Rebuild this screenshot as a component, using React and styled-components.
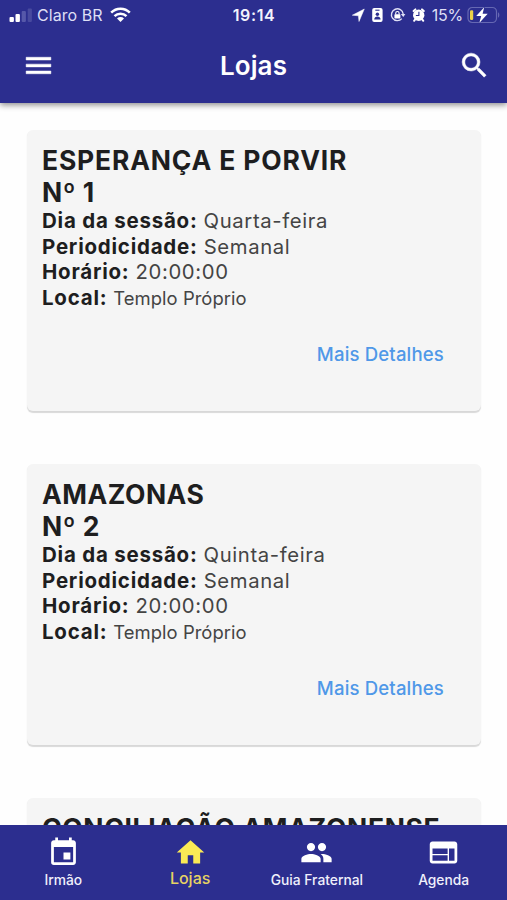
import React from 'react';
import styled, { createGlobalStyle } from 'styled-components';
import { MdMenu, MdSearch, MdEvent, MdHome, MdPeople, MdWeb } from 'react-icons/md';

const GlobalStyle = createGlobalStyle`
  * { box-sizing: border-box; }
  body { margin: 0; background: #fff; }
`;

const Screen = styled.div`
  width: 507px;
  height: 900px;
  display: flex;
  flex-direction: column;
  overflow: hidden;
  background: #fefefe;
  color: #1e1e1f;
  font-family: Inter, "Liberation Sans", sans-serif;
`;

const Header = styled.header`
  flex: none;
  height: 103px;
  background: #2c2e8f;
  color: #fff;
  z-index: 1;
  box-shadow: 0 2px 6px rgba(0, 0, 0, 0.45);
`;

const StatusBar = styled.div`
  height: 30px;
  display: grid;
  grid-template-columns: 1fr auto 1fr;
  align-items: center;
  padding: 0 7px 0 9px;
  font-size: 16px;
  line-height: 30px;
  color: #dedff5;
`;

const StatusGroup = styled.div`
  display: flex;
  align-items: center;
  justify-content: ${(p) => (p.$end ? 'flex-end' : 'flex-start')};
  svg { flex: none; display: block; }
`;

const Carrier = styled.span`
  margin: 0 7px 0 5px;
  letter-spacing: 0.05px;
`;

const Clock = styled.span`
  font-weight: 600;
  font-size: 16px;
  letter-spacing: 0.6px;
  margin-right: 1px;
  color: #f3f3fd;
`;

const Percent = styled.span`
  margin: 0 4px 0 6px;
  letter-spacing: -0.2px;
`;

const TitleBar = styled.div`
  height: 71px;
  display: grid;
  grid-template-columns: 1fr auto 1fr;
  align-items: center;
  padding: 0 16px 0 22px;
`;

const IconButton = styled.button`
  display: flex;
  padding: 0;
  border: 0;
  background: none;
  color: #fff;
  justify-self: ${(p) => (p.$end ? 'end' : 'start')};
  svg { width: 33px; height: 33px; }
  path:last-child { stroke: #fff; stroke-width: 0.35px; }
`;

const PageTitle = styled.h1`
  margin: 0 6px 0 0;
  font-size: 26px;
  line-height: 32px;
  font-weight: 600;
  letter-spacing: 0.1px;
`;

const List = styled.main`
  flex: 1;
  min-height: 0;
  overflow: hidden;
  padding: 27px 26px 0 27px;
  display: flex;
  flex-direction: column;
  gap: 53.5px;
`;

const Card = styled.article`
  flex: none;
  height: 280.7px;
  border-radius: 6px;
  background: #f5f5f5;
  box-shadow: 0 1.5px 1px rgba(0, 0, 0, 0.15);
  padding: 14px 37px 0 15px;
  display: flex;
  flex-direction: column;
`;

const CardTitle = styled.h2`
  margin: 0;
  font-size: 26.5px;
  line-height: 32px;
  font-weight: 650;
  letter-spacing: ${(p) => p.$spacing || '0.5px'};
  white-space: nowrap;
`;

const Field = styled.p`
  margin: 0;
  font-size: 20.3px;
  line-height: 25.6px;
  white-space: nowrap;
`;

const Label = styled.b`
  font-size: 20.5px;
  font-weight: 700;
  letter-spacing: 0.77px;
  margin-right: 6px;
`;

const Value = styled.span`
  color: #444;
  font-size: ${(p) => (p.$small ? '18.4px' : 'inherit')};
  letter-spacing: ${(p) => (p.$small ? '0.05px' : '0.63px')};
`;

const DetailsLink = styled.a`
  align-self: flex-end;
  margin-top: 30.2px;
  font-size: 18.6px;
  line-height: 24px;
  font-weight: 500;
  letter-spacing: 0.14px;
  color: #4f98e8;
`;

const TabBar = styled.nav`
  flex: none;
  height: 75.5px;
  display: grid;
  grid-template-columns: repeat(4, 1fr);
  background: #2c2e8f;
  z-index: 1;
`;

const Tab = styled.a`
  display: flex;
  flex-direction: column;
  align-items: center;
  padding-top: 11.5px;
  color: ${(p) => (p.$active ? '#fbea55' : '#fff')};
  svg { width: 33px; height: 33px; flex: none; }
`;

const TabLabel = styled.span`
  margin-top: ${(p) => (p.$active ? '-1px' : '1px')};
  font-size: ${(p) => (p.$active ? '16px' : '13.8px')};
  line-height: 20px;
  font-weight: 500;
  letter-spacing: 0;
  white-space: nowrap;
  color: ${(p) => (p.$active ? '#e6d263' : '#f0f0fb')};
`;

const SignalIcon = () => (
  <svg width="23" height="15" viewBox="0 0 23 15">
    <rect x="0.5" y="9" width="4.4" height="5" rx="1" fill="#fff" />
    <rect x="6.5" y="6" width="4.4" height="8" rx="1" fill="#fff" />
    <rect x="12.7" y="3" width="4.2" height="11" rx="1" fill="#5658a9" />
    <rect x="18.7" y="0.5" width="4.2" height="13.5" rx="1" fill="#484a9f" />
  </svg>
);

const WifiIcon = () => (
  <svg width="21" height="16" viewBox="0 0 21 16" fill="none" stroke="#fff" strokeWidth="2.5">
    <path d="M1.2 5.6C6.3.3 14.7.3 19.8 5.6" />
    <path d="M4.5 9.1c3.3-3.3 8.7-3.3 12 0" />
    <path d="M7 11.4c2-1.8 5-1.8 7 0L10.5 15z" fill="#fff" stroke="none" />
  </svg>
);

const StatusIcons = () => (
  <svg width="74" height="18" viewBox="0 0 74 18">
    <path d="M.3 9.2 12.3 3 7 15.5 6.4 9.8z" fill="#fff" stroke="#fff" strokeWidth=".5" />
    <rect x="20.2" y="2" width="10.4" height="14" rx="2" fill="#fff" />
    <path d="M23.3 4.2h4.2" stroke="#2c2e8f" strokeWidth="1.1" />
    <circle cx="25.4" cy="8.2" r="1.7" fill="#2c2e8f" />
    <path d="M22.2 13.4c0-4 6.4-4 6.4 0z" fill="#2c2e8f" />
    <path d="M49.8 12.6A5.9 5.9 0 1 1 51.2 8" fill="none" stroke="#dedff5" strokeWidth="1.4" />
    <path d="m48.8 8 4.6 0-2.1 3z" fill="#dedff5" />
    <rect x="42.4" y="8.3" width="6" height="4.1" rx=".7" fill="#fff" />
    <path d="M43.7 8.5V7.2a1.7 1.7 0 0 1 3.4 0v1.3" fill="none" stroke="#fff" strokeWidth="1.1" />
    <circle cx="66.7" cy="9.2" r="5.7" fill="#fff" />
    <path d="m61.6 5 1.8-1.6M71.8 5 70 3.4M63 13.6l-.9 1.2M70.4 13.6l.9 1.2" stroke="#fff" strokeWidth="2" strokeLinecap="round" />
    <path d="M66.9 5.8v3.7h-3" fill="none" stroke="#2c2e8f" strokeWidth="1.1" />
  </svg>
);

const BatteryIcon = () => (
  <svg width="33" height="18" viewBox="0 0 33 18">
    <rect x="1" y="1.5" width="28.5" height="15" rx="4.2" fill="none" stroke="#6668b3" strokeWidth="1.2" />
    <path d="M31 6.3c1.8.6 1.8 4.8 0 5.4z" fill="#6668b3" />
    <rect x="3" y="4.2" width="3.2" height="9.7" rx="1.2" fill="#ecd348" />
    <path d="M17.2 1.3 9.2 10h5l-1.9 6.9 8.4-9.2h-5.1z" fill="#fff" stroke="#2c2e8f" strokeWidth="1" paintOrder="stroke" />
  </svg>
);

const lodges = [
  {
    name: 'ESPERANÇA E PORVIR',
    spacing: '0.82px',
    number: 1,
    day: 'Quarta-feira',
    frequency: 'Semanal',
    time: '20:00:00',
    place: 'Templo Próprio',
  },
  {
    name: 'AMAZONAS',
    spacing: '0.5px',
    number: 2,
    day: 'Quinta-feira',
    frequency: 'Semanal',
    time: '20:00:00',
    place: 'Templo Próprio',
  },
  { name: 'CONCILIAÇÃO AMAZONENSE', spacing: '0.65px' },
];

const tabs = [
  { label: 'Irmão', Icon: MdEvent },
  { label: 'Lojas', Icon: MdHome, active: true },
  { label: 'Guia Fraternal', Icon: MdPeople },
  { label: 'Agenda', Icon: MdWeb },
];

const LodgeCard = ({ lodge }) => (
  <Card>
    <CardTitle $spacing={lodge.spacing}>{lodge.name}</CardTitle>
    {lodge.number && (
      <>
        <CardTitle>Nº {lodge.number}</CardTitle>
        <Field><Label>Dia da sessão:</Label><Value>{lodge.day}</Value></Field>
        <Field><Label>Periodicidade:</Label><Value>{lodge.frequency}</Value></Field>
        <Field><Label>Horário:</Label><Value>{lodge.time}</Value></Field>
        <Field><Label>Local:</Label><Value $small>{lodge.place}</Value></Field>
        <DetailsLink>Mais Detalhes</DetailsLink>
      </>
    )}
  </Card>
);

export default function App() {
  return (
    <Screen>
      <GlobalStyle />
      <Header>
        <StatusBar>
          <StatusGroup>
            <SignalIcon />
            <Carrier>Claro BR</Carrier>
            <WifiIcon />
          </StatusGroup>
          <Clock>19:14</Clock>
          <StatusGroup $end>
            <StatusIcons />
            <Percent>15%</Percent>
            <BatteryIcon />
          </StatusGroup>
        </StatusBar>
        <TitleBar>
          <IconButton aria-label="Menu"><MdMenu /></IconButton>
          <PageTitle>Lojas</PageTitle>
          <IconButton $end aria-label="Buscar"><MdSearch /></IconButton>
        </TitleBar>
      </Header>
      <List>
        {lodges.map((lodge) => <LodgeCard key={lodge.name} lodge={lodge} />)}
      </List>
      <TabBar>
        {tabs.map(({ label, Icon, active }) => (
          <Tab key={label} $active={active}>
            <Icon />
            <TabLabel $active={active}>{label}</TabLabel>
          </Tab>
        ))}
      </TabBar>
    </Screen>
  );
}
